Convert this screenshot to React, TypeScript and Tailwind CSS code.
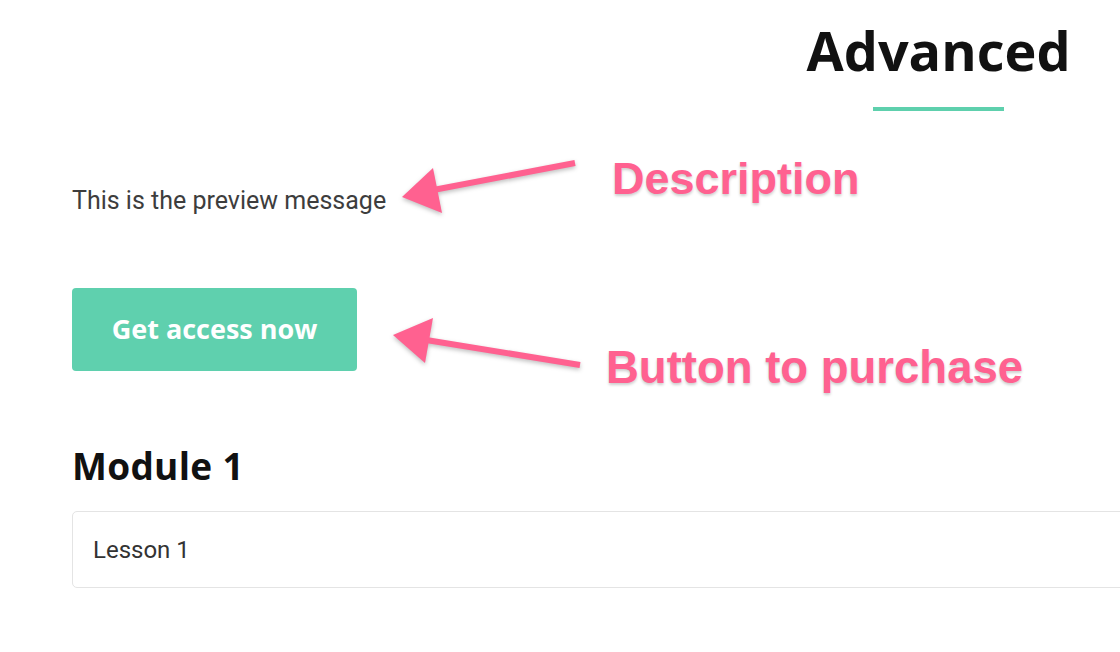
import React from 'react';

function Arrows() {
  return (
    <svg
      className="absolute inset-0 pointer-events-none drop-shadow-[0_2px_2px_rgba(0,0,0,0.25)]"
      width={1120}
      height={652}
      viewBox="0 0 1120 652"
    >
      {/* description arrow */}
      <line x1={575} y1={163} x2={428} y2={191} stroke="#ff6190" strokeWidth={6} />
      <polygon points="402,197 433,168 442,213" fill="#ff6190" />
      {/* purchase arrow */}
      <line x1={580} y1={365} x2={420} y2={339} stroke="#ff6190" strokeWidth={6} />
      <polygon points="393,335 433,318 425,363" fill="#ff6190" />
    </svg>
  );
}

export default function App() {
  return (
    <div className="relative w-[1120px] h-[652px] overflow-hidden bg-white">
      <div className="ml-[72px] w-[1733px] flex flex-col">
        <div className="flex flex-col items-center pt-[23px]">
          <h1 className="font-['Open_Sans','DejaVu_Sans',sans-serif] text-[54px] leading-none font-bold text-[#111]">
            Advanced
          </h1>
          <div className="mt-[30px] w-[131px] h-[4px] bg-[#5ed0ad]" />
        </div>

        <p className="mt-[77px] font-['Roboto','Liberation_Sans',sans-serif] text-[25px] leading-none text-[#3d3d3d]">
          This is the preview message
        </p>

        <button className="mt-[75px] w-[285px] h-[83px] rounded-[4px] bg-[#5fd0ae] text-white font-['Open_Sans','DejaVu_Sans',sans-serif] text-[27px] font-bold flex items-center justify-center">
          Get access now
        </button>

        <h2 className="mt-[76px] font-['Open_Sans','DejaVu_Sans',sans-serif] text-[37px] leading-none font-bold tracking-[0.3px] text-[#111]">
          Module 1
        </h2>

        <div className="mt-[27px] h-[77px] border border-[#e4e4e4] rounded-[5px] flex items-center pl-[20px]">
          <span className="font-['Roboto','Liberation_Sans',sans-serif] text-[24px] leading-none text-[#333]">
            Lesson 1
          </span>
        </div>
      </div>

      <Arrows />

      <span className="absolute left-[612px] top-[156px] font-['Liberation_Sans',Arial,sans-serif] text-[45px] leading-none font-bold text-[#ff6190] [text-shadow:0_2px_3px_rgba(0,0,0,0.2)]">
        Description
      </span>
      <span className="absolute left-[606px] top-[345px] font-['Liberation_Sans',Arial,sans-serif] text-[45.5px] leading-none font-bold text-[#ff6190] [text-shadow:0_2px_3px_rgba(0,0,0,0.2)]">
        Button to purchase
      </span>
    </div>
  );
}
